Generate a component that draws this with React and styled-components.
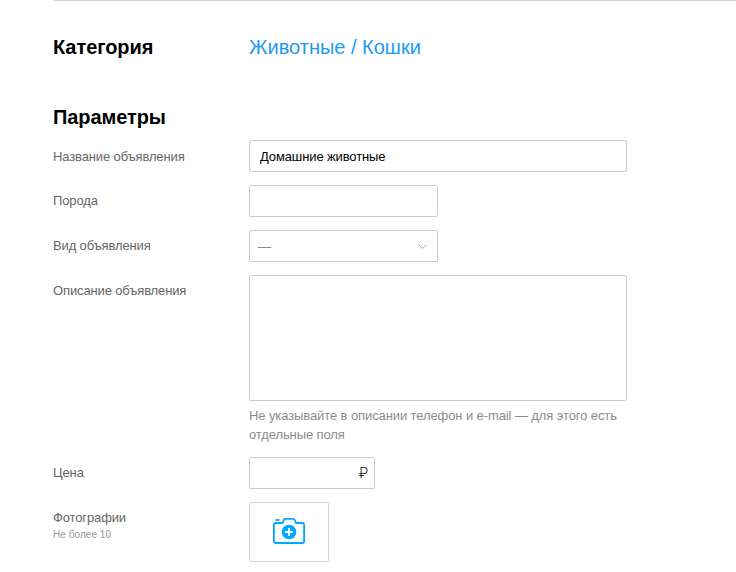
import styled, { createGlobalStyle } from "styled-components";

const GlobalStyle = createGlobalStyle`
  html, body {
    margin: 0;
    padding: 0;
    background: #fff;
    font-family: "Liberation Sans", Arial, sans-serif;
  }
`;

const Page = styled.div`
  width: 736px;
  height: 572px;
  overflow: hidden;
  padding-left: 53px;
  box-sizing: border-box;
`;

const Content = styled.div`
  border-top: 1px solid #d4d4d4;
  padding-top: 33px;
`;

const CategoryRow = styled.div`
  display: grid;
  grid-template-columns: 196px 1fr;
  align-items: center;
  height: 26px;
  margin-bottom: 44px;
`;

const Heading = styled.h2`
  margin: 0;
  font-size: 20px;
  line-height: 26px;
  font-weight: 700;
  letter-spacing: -0.08px;
  color: #000;
`;

const CategoryLink = styled.a`
  font-size: 20px;
  line-height: 26px;
  color: #1b9af5;
  text-decoration: none;
`;

const Fields = styled.div`
  display: flex;
  flex-direction: column;
  gap: 13px;
  margin-top: 10px;
`;

const Row = styled.div`
  display: grid;
  grid-template-columns: 196px 1fr;
  align-items: start;
`;

const Label = styled.div`
  padding-top: ${(p) => p.$top ?? 8}px;
  font-size: 13px;
  line-height: 16px;
  letter-spacing: -0.13px;
  color: #666;
`;

const SubLabel = styled.div`
  margin-top: 2px;
  font-size: 10px;
  line-height: 14px;
  letter-spacing: 0.05px;
  color: #999;
`;

const Input = styled.input`
  display: block;
  box-sizing: border-box;
  width: ${(p) => p.$width}px;
  height: 32px;
  padding: 0 10px;
  border: 1px solid #ccc;
  border-radius: 2px;
  outline: none;
  background: #fff;
  font: 13px "Liberation Sans", Arial, sans-serif;
  letter-spacing: -0.12px;
  color: #000;
`;

const PriceBox = styled.div`
  position: relative;
  width: 126px;
`;

const Currency = styled.span`
  position: absolute;
  right: 7px;
  top: 7px;
  font: 300 14px/18px Roboto, "DejaVu Sans", sans-serif;
  color: #000;
`;

const Select = styled.div`
  display: flex;
  align-items: center;
  justify-content: space-between;
  box-sizing: border-box;
  width: 189px;
  height: 32px;
  padding: 0 10px 0 8px;
  border: 1px solid #ccc;
  border-radius: 2px;
  font-size: 13px;
  color: #888;
`;

const TextArea = styled.textarea`
  display: block;
  box-sizing: border-box;
  width: 378px;
  height: 126px;
  padding: 8px 10px;
  border: 1px solid #ccc;
  border-radius: 2px;
  outline: none;
  resize: none;
`;

const Hint = styled.div`
  width: 378px;
  margin-top: 5px;
  font-size: 13px;
  line-height: 19px;
  letter-spacing: -0.1px;
  color: #8c8c8c;
`;

const PhotoButton = styled.button`
  display: flex;
  align-items: center;
  justify-content: center;
  box-sizing: border-box;
  width: 80px;
  height: 60px;
  padding: 0 0 2px;
  border: 1px solid #d4d4d4;
  border-radius: 2px;
  background: #fff;
`;

const Chevron = () => (
  <svg width="9" height="5" viewBox="0 0 9 5" fill="none">
    <path d="M.3.3 4.500 4.500 8.700.3" stroke="#aaa" strokeWidth="1" />
  </svg>
);

const CameraPlus = () => (
  <svg width="32" height="26" viewBox="0 0 32 26" fill="none">
    <path
      d="M.9 6.500A1.500 1.500 0 0 1 2.400 5H9.500L11 1.700A1.200 1.200 0 0 1 12 .9h8.500a1.200 1.200 0 0 1 1 .8L23 5h6.600a1.500 1.500 0 0 1 1.500 1.500v17a1.500 1.500 0 0 1-1.500 1.500H2.400a1.500 1.500 0 0 1-1.500-1.500z"
      stroke="#00aaff"
      strokeWidth="1.800"
    />
    <path d="M2.500 2h4" stroke="#00aaff" strokeWidth="1.800" />
    <circle cx="16" cy="14" r="7.300" fill="#00aaff" />
    <path d="M16 10v8M12 14h8" stroke="#fff" strokeWidth="1.800" />
  </svg>
);

export default function App() {
  return (
    <Page>
      <GlobalStyle />
      <Content>
        <CategoryRow>
          <Heading>Категория</Heading>
          <CategoryLink href="#">Животные / Кошки</CategoryLink>
        </CategoryRow>
        <Heading>Параметры</Heading>
        <Fields>
          <Row>
            <Label $top={9}>Название объявления</Label>
            <Input $width={378} defaultValue="Домашние животные" />
          </Row>
          <Row>
            <Label>Порода</Label>
            <Input $width={189} />
          </Row>
          <Row>
            <Label>Вид объявления</Label>
            <Select>
              <span>—</span>
              <Chevron />
            </Select>
          </Row>
          <Row>
            <Label>Описание объявления</Label>
            <div>
              <TextArea />
              <Hint>
                Не указывайте в описании телефон и e-mail — для этого есть
                отдельные поля
              </Hint>
            </div>
          </Row>
          <Row>
            <Label>Цена</Label>
            <PriceBox>
              <Input $width={126} />
              <Currency>₽</Currency>
            </PriceBox>
          </Row>
          <Row>
            <Label>
              Фотографии
              <SubLabel>Не более 10</SubLabel>
            </Label>
            <PhotoButton type="button">
              <CameraPlus />
            </PhotoButton>
          </Row>
        </Fields>
      </Content>
    </Page>
  );
}
